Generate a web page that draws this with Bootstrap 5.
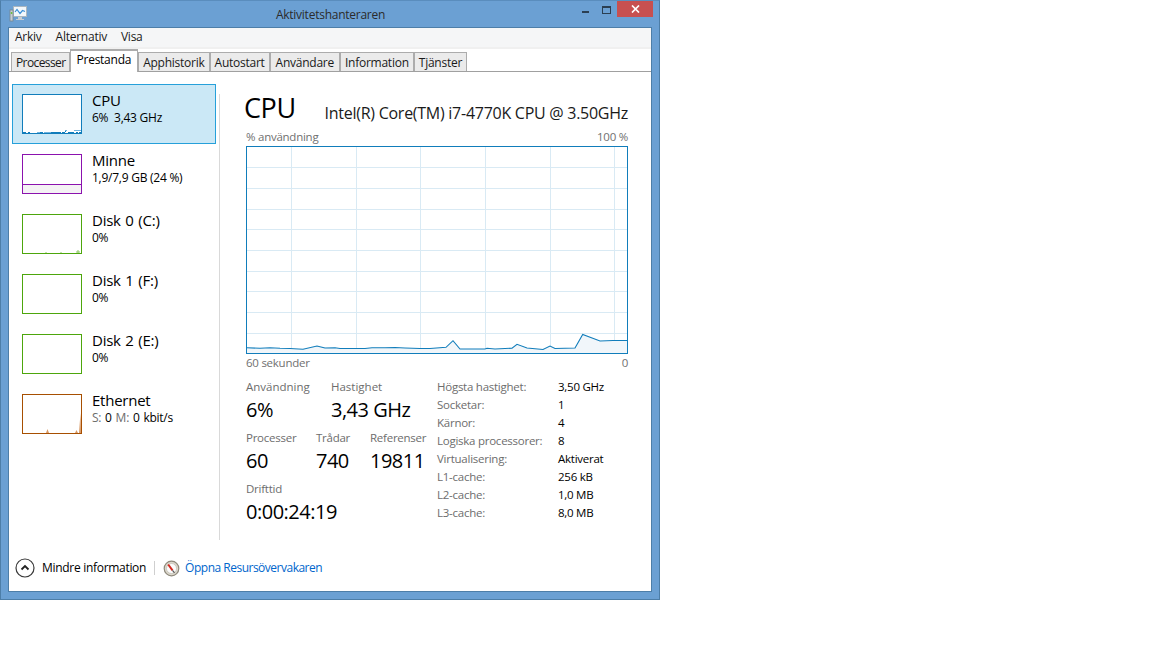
<!DOCTYPE html>
<html lang="sv">
<head>
    <meta charset="UTF-8">
    <title>Aktivitetshanteraren</title>
    <link href="https://cdn.jsdelivr.net/npm/bootstrap@5.3.0/dist/css/bootstrap.min.css" rel="stylesheet">
    <style>
        html, body { background: #fff; }
        body { font-family: "Open Sans", "Noto Sans", sans-serif; font-size: 12px; line-height: 16px; color: #000; letter-spacing: -0.25px; }
        .tm-window { width: 660px; height: 600px; background: #6ba0d3; border: 1px solid #4d7ea8; border-top-color: #5a8dbd; padding: 0 7px 7px 7px; }
        .tm-titlebar { height: 26px; }
        .tm-iconbox { width: 92px; flex: none; }
        .tm-appicon { margin-left: 1px; margin-top: 5px; display: block; }
        .tm-title { flex: 1; text-align: center; color: #2b2b2b; padding-top: 6px; }
        .tm-caption { height: 16px; width: 92px; flex: none; justify-content: flex-end; margin-right: -1px; }
        .tm-minbtn, .tm-maxbtn { width: 20px; height: 16px; flex: none; }
        .tm-closebtn { width: 36px; height: 16px; background: #c75050; display: flex; align-items: center; justify-content: center; margin-left: 6px; flex: none; }
        .tm-client { height: 565px; background: #fff; border: 1px solid #4d7ea8; display: flex; flex-direction: column; }
        .tm-menu { height: 19px; background: #f5f6f7; padding: 0 0 2px 6px; gap: 14px; align-items: center; }
        .tm-menu span { color: #1a1a1a; }
        .tm-tabsrow { height: 25px; padding: 0 0 0 2px; border-bottom: 1px solid #a0a0a0; background: linear-gradient(#f0f0f0 0, #f0f0f0 2px, #fff 2px); align-items: flex-end; flex-wrap: nowrap; }
        .tm-tabsrow .nav-link { height: 19px; margin: 0; padding: 2px 4px 0 4px; background: #ebebeb; border-style: solid; border-color: #acacac; border-width: 1px 1px 0 1px; border-radius: 0; color: #1a1a1a; font-size: 12px; line-height: 16px; }
        .tm-tabsrow .nav-link.active { height: 23px; margin-bottom: -1px; background: #fff; color: #000; padding: 1px 6px 0 6px; border-color: #acacac; border-width: 2px 1px 0 1px; }
        .tm-tabsrow .nav-link.tm-tab-tight { letter-spacing: -0.6px; padding: 2px 3px 0 4px; }
        .tm-tabsrow .nav-link.tm-tab-roomy { padding: 2px 5px 0 5px; }
        .tm-body { flex: 1; min-height: 0; display: flex; }
        .tm-side { width: 207px; margin-left: 3px; padding-top: 12px; }
        .tm-side .list-group-item { display: flex; gap: 10px; width: 204px; height: 60px; padding: 9px 9px; border: 1px solid transparent; border-radius: 0; background: transparent; color: #000; }
        .tm-side .list-group-item.active { background: #cbe8f6; border-color: #26a0da; color: #000; margin-top: 0; }
        .tm-thumb { width: 60px; height: 40px; flex: none; display: block; background: #fff; }
        .tm-name { font-size: 15px; line-height: 18px; margin-top: -3px; word-spacing: 1px; }
        .tm-sub { line-height: 16px; margin-top: 1px; white-space: nowrap; }
        .tm-sub .tm-mute { color: #6d6d6d; }
        .tm-wide { word-spacing: 1px; }
        .tm-split { width: 1px; background: #d9d9d9; margin: 22px 0 0 0; height: 446px; }
        .tm-main { width: 409px; padding: 12px 0 0 26px; flex: none; }
        .tm-head { height: 40px; width: 382px; margin-left: -2px; }
        .tm-bigname { font-size: 27px; line-height: 40px; letter-spacing: -0.4px; padding-top: 4px; }
        .tm-model { font-size: 16px; line-height: 20px; padding-top: 19px; color: #1a1a1a; letter-spacing: -0.265px; margin-right: -2px; }
        .tm-axis { width: 382px; color: #707070; height: 16px; margin-top: 5px; font-size: 11.5px; }
        .tm-graph { display: block; margin-top: 1px; }
        .tm-axis2 { margin-top: 1px; }
        .tm-stats { width: 382px; margin-top: 8px; }
        .tm-left { width: 191px; flex: none; }
        .tm-statrow { display: flex; height: 51px; }
        .tm-lbl { color: #6d6d6d; line-height: 16px; font-size: 11.5px; }
        .tm-lbl-open { letter-spacing: 0; }
        .tm-val { font-size: 20px; line-height: 27px; margin-top: 1px; letter-spacing: -0.5px; }
        .tm-col85 { width: 85px; }
        .tm-col70 { width: 70px; }
        .tm-col54 { width: 54px; }
        .tm-details { display: grid; grid-template-columns: 121px 1fr; grid-auto-rows: 18px; font-size: 11.5px; line-height: 18px; margin-top: -1px; }
        .tm-details span:nth-child(odd) { color: #6d6d6d; }
        .tm-foot { height: 52px; display: flex; align-items: center; padding: 6px 0 0 6px; margin-top: auto; }
        .tm-chevron { margin-right: 7px; flex: none; }
        .tm-footlabel { letter-spacing: -0.3px; }
        .tm-footsep { width: 1px; height: 14px; background: #cfcfcf; margin: 0 8px 0 8px; }
        .tm-foot a { color: #0066cc; text-decoration: none; margin-left: 5px; letter-spacing: -0.5px; }
    </style>
</head>
<body>
    <div class="tm-window">
        <div class="tm-titlebar d-flex">
            <div class="tm-iconbox">
                <svg class="tm-appicon" width="18" height="16" viewBox="0 0 18 16">
                    <rect x="4.500" y="0.500" width="13" height="10" fill="#f2f7fb" stroke="#a9b6c0"/>
                    <path d="M6 6l2-2.500 3 4 2.500-3 2.500 1" fill="none" stroke="#3b8fd6" stroke-width="1.200"/>
                    <path d="M9 11h4v2h2v1H7v-1h2z" fill="#c6ccd1"/>
                    <rect x="1" y="4" width="3" height="11" fill="#c8ced2" stroke="#77858f" stroke-width="0.800"/>
                    <rect x="1.800" y="6" width="1.500" height="2" fill="#6fbf3f"/>
                </svg>
            </div>
            <div class="tm-title">Aktivitetshanteraren</div>
            <div class="tm-caption d-flex">
                <div class="tm-minbtn"><svg width="20" height="16" viewBox="0 0 20 16"><rect x="11" y="9" width="7" height="2" fill="#2b3f52"/></svg></div>
                <div class="tm-maxbtn"><svg width="20" height="16" viewBox="0 0 20 16"><rect x="11.500" y="4.500" width="8" height="7" fill="none" stroke="#2b3f52"/><rect x="11" y="4" width="9" height="2" fill="#2b3f52"/></svg></div>
                <div class="tm-closebtn"><svg width="9" height="8" viewBox="0 0 9 8"><path d="M1 0.500l7 7M8 0.500l-7 7" stroke="#fff" stroke-width="1.700"/></svg></div>
            </div>
        </div>
        <div class="tm-client">
            <div class="tm-menu d-flex">
                <span>Arkiv</span><span>Alternativ</span><span>Visa</span>
            </div>
            <ul class="nav nav-tabs tm-tabsrow">
                <li class="nav-item"><a class="nav-link tm-tab-tight" href="#">Processer</a></li>
                <li class="nav-item"><a class="nav-link active" href="#">Prestanda</a></li>
                <li class="nav-item"><a class="nav-link" href="#">Apphistorik</a></li>
                <li class="nav-item"><a class="nav-link" href="#">Autostart</a></li>
                <li class="nav-item"><a class="nav-link tm-tab-roomy" href="#">Användare</a></li>
                <li class="nav-item"><a class="nav-link" href="#">Information</a></li>
                <li class="nav-item"><a class="nav-link" href="#">Tjänster</a></li>
            </ul>
            <div class="tm-body">
                <div class="tm-side">
                    <div class="list-group">
                        <div class="list-group-item active">
                            <svg class="tm-thumb" viewBox="0 0 60 40">
                                <path d="M1 38.500h3M6 38.500h2M18 38.500h3M29 38.500h10M40 38.500h3M43 37.500h1M46 38.500h6M54 38.500h2M57 38.500h2" stroke="#117dbb"/>
                                <path d="M15 38.500h3M22 38.500h7M43 36.500h2M52 36.500h7" stroke="#6fb2dd"/>
                                <rect x="0.500" y="0.500" width="59" height="39" fill="none" stroke="#117dbb"/>
                            </svg>
                            <div><div class="tm-name">CPU</div><div class="tm-sub">6%&nbsp; 3,43 GHz</div></div>
                        </div>
                        <div class="list-group-item">
                            <svg class="tm-thumb" viewBox="0 0 60 40">
                                <rect x="1" y="30" width="58" height="9" fill="#f4f2f4"/>
                                <path d="M1 30.500h58" stroke="#8b12ae"/>
                                <rect x="0.500" y="0.500" width="59" height="39" fill="none" stroke="#8b12ae"/>
                            </svg>
                            <div><div class="tm-name">Minne</div><div class="tm-sub">1,9/7,9 GB (24 %)</div></div>
                        </div>
                        <div class="list-group-item">
                            <svg class="tm-thumb" viewBox="0 0 60 40">
                                <path d="M24 39v-1M39 39v-1M55 39v-2M56 39v-3M57 39v-2" stroke="#8cc665"/>
                                <rect x="0.500" y="0.500" width="59" height="39" fill="none" stroke="#4da60c"/>
                            </svg>
                            <div><div class="tm-name">Disk 0 (C:)</div><div class="tm-sub">0%</div></div>
                        </div>
                        <div class="list-group-item">
                            <svg class="tm-thumb" viewBox="0 0 60 40"><rect x="0.500" y="0.500" width="59" height="39" fill="#fff" stroke="#4da60c"/></svg>
                            <div><div class="tm-name">Disk 1 (F:)</div><div class="tm-sub">0%</div></div>
                        </div>
                        <div class="list-group-item">
                            <svg class="tm-thumb" viewBox="0 0 60 40"><rect x="0.500" y="0.500" width="59" height="39" fill="#fff" stroke="#4da60c"/></svg>
                            <div><div class="tm-name">Disk 2 (E:)</div><div class="tm-sub">0%</div></div>
                        </div>
                        <div class="list-group-item">
                            <svg class="tm-thumb" viewBox="0 0 60 40">
                                <path d="M24 39l1.500-4 1.500 4zM53 39l1.500-3 1.500 3zM57 39l1.500-20 .5 20z" fill="#d99a66"/>
                                <rect x="0.500" y="0.500" width="59" height="39" fill="none" stroke="#a74f01"/>
                            </svg>
                            <div><div class="tm-name">Ethernet</div><div class="tm-sub tm-wide"><span class="tm-mute">S:</span> 0 <span class="tm-mute">M:</span> 0 kbit/s</div></div>
                        </div>
                    </div>
                </div>
                <div class="tm-split"></div>
                <div class="tm-main">
                    <div class="tm-head d-flex justify-content-between">
                        <div class="tm-bigname">CPU</div>
                        <div class="tm-model">Intel(R) Core(TM) i7-4770K CPU @ 3.50GHz</div>
                    </div>
                    <div class="tm-axis d-flex justify-content-between"><span>% användning</span><span>100 %</span></div>
                    <svg class="tm-graph" width="382" height="208" viewBox="0 0 382 208">
                        <g stroke="#d9eaf4" fill="none">
                            <path d="M1 21.500h380M1 42.500h380M1 63.500h380M1 83.500h380M1 104.500h380M1 125.500h380M1 145.500h380M1 166.500h380M1 187.500h380"/>
                            <path d="M45.500 1v206M110.500 1v206M174.500 1v206M239.500 1v206M304.500 1v206M368.500 1v206"/>
                        </g>
                        <polygon points="1,201.700 14,202.300 24,201.700 34,202.300 44,202.500 57,203.300 71,200 79,202 89,201.700 94,202.500 119,202.500 126,201.700 139,201.700 149,201.500 159,202 174,202.500 184,202.500 200,201.300 207,194.700 214,203 239,203 241,202.200 249,203 259,202.500 266,202.200 271,198.300 281,202 297,203.500 304,200 309,202.500 329,202 336.700,188.500 354,195 367,194.500 381,194.500 381,207 1,207" fill="#f1f6fa"/>
                        <polyline points="1,201.700 14,202.300 24,201.700 34,202.300 44,202.500 57,203.300 71,200 79,202 89,201.700 94,202.500 119,202.500 126,201.700 139,201.700 149,201.500 159,202 174,202.500 184,202.500 200,201.300 207,194.700 214,203 239,203 241,202.200 249,203 259,202.500 266,202.200 271,198.300 281,202 297,203.500 304,200 309,202.500 329,202 336.700,188.500 354,195 367,194.500 381,194.500" fill="none" stroke="#117dbb" stroke-width="1.100"/>
                        <rect x="0.500" y="0.500" width="381" height="207" fill="none" stroke="#117dbb"/>
                    </svg>
                    <div class="tm-axis tm-axis2 d-flex justify-content-between"><span>60 sekunder</span><span>0</span></div>
                    <div class="tm-stats d-flex">
                        <div class="tm-left">
                            <div class="tm-statrow">
                                <div class="tm-col85"><div class="tm-lbl tm-lbl-open">Användning</div><div class="tm-val">6%</div></div>
                                <div><div class="tm-lbl tm-lbl-open">Hastighet</div><div class="tm-val">3,43 GHz</div></div>
                            </div>
                            <div class="tm-statrow">
                                <div class="tm-col70"><div class="tm-lbl">Processer</div><div class="tm-val">60</div></div>
                                <div class="tm-col54"><div class="tm-lbl">Trådar</div><div class="tm-val">740</div></div>
                                <div><div class="tm-lbl">Referenser</div><div class="tm-val">19811</div></div>
                            </div>
                            <div class="tm-statrow">
                                <div><div class="tm-lbl">Drifttid</div><div class="tm-val">0:00:24:19</div></div>
                            </div>
                        </div>
                        <div class="tm-details">
                            <span>Högsta hastighet:</span><span>3,50 GHz</span>
                            <span>Socketar:</span><span>1</span>
                            <span>Kärnor:</span><span>4</span>
                            <span>Logiska processorer:</span><span>8</span>
                            <span>Virtualisering:</span><span>Aktiverat</span>
                            <span>L1-cache:</span><span>256 kB</span>
                            <span>L2-cache:</span><span>1,0 MB</span>
                            <span>L3-cache:</span><span>8,0 MB</span>
                        </div>
                    </div>
                </div>
            </div>
            <div class="tm-foot">
                <svg class="tm-chevron" width="20" height="20" viewBox="0 0 20 20">
                    <circle cx="10" cy="10" r="9" fill="#fff" stroke="#3a3a3a" stroke-width="1.200"/>
                    <path d="M6.500 11.500L10 8l3.500 3.500" fill="none" stroke="#222" stroke-width="1.800"/>
                </svg>
                <span class="tm-footlabel">Mindre information</span>
                <span class="tm-footsep"></span>
                <svg width="17" height="17" viewBox="0 0 17 17">
                    <circle cx="8.500" cy="8.500" r="7.300" fill="#dcd8cd" stroke="#8f8a7c" stroke-width="1.200"/>
                    <circle cx="8.500" cy="8.500" r="5" fill="#fcfcfc" stroke="#b9b5aa" stroke-width="0.600"/>
                    <path d="M5.200 4.500l4.300 5.800" stroke="#d42a20" stroke-width="2"/>
                    <path d="M9.500 10.300l2 2.500" stroke="#555" stroke-width="1.200"/>
                </svg>
                <a href="#">Öppna Resursövervakaren</a>
            </div>
        </div>
    </div>
    <script src="https://cdn.jsdelivr.net/npm/bootstrap@5.3.0/dist/js/bootstrap.bundle.min.js"></script>
</body>
</html>
